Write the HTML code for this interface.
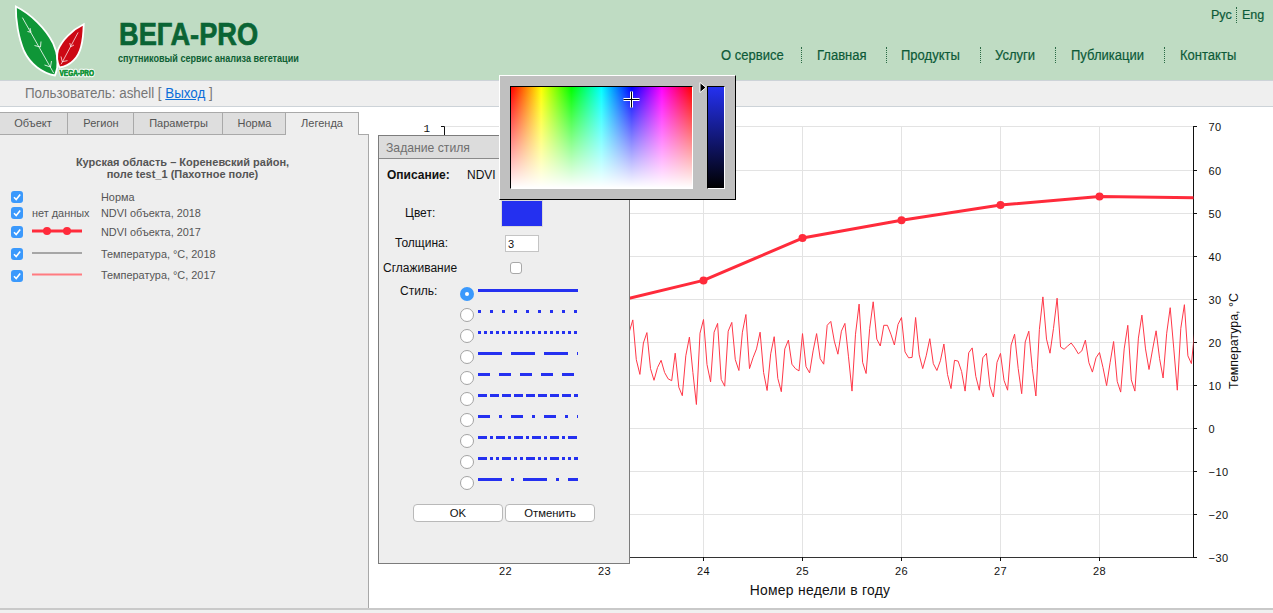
<!DOCTYPE html>
<html><head><meta charset="utf-8">
<style>
*{box-sizing:border-box}
html,body{margin:0;padding:0}
body{width:1273px;height:613px;overflow:hidden;position:relative;background:#fff;font-family:"Liberation Sans",sans-serif}
.abs{position:absolute;white-space:nowrap}
#hdr{position:absolute;left:0;top:0;width:1273px;height:80px;background:#bfdcc3}
.nav{position:absolute;top:47px;font-size:14px;color:#0d5a38;line-height:16px;-webkit-text-stroke:0.2px #0d5a38;transform:scaleX(0.93);transform-origin:0 0}
.vd{position:absolute;width:1px;border-left:1px dotted #2a6a45}
#ubar{position:absolute;left:0;top:80px;width:1273px;height:27px;background:#efefef;border-top:1px solid #cdd3d8;border-bottom:1px solid #cdd3d8}
#ubar .t{position:absolute;left:25px;top:4px;font-size:14px;color:#767676;line-height:16px;transform:scaleX(0.955);transform-origin:0 0}
#ubar a{color:#0b6ed9;text-decoration:underline}
.tab{position:absolute;top:112px;height:23px;background:#dedede;border:1px solid #a9a9a9;border-right:none;font-size:11px;color:#555;text-align:center;line-height:20px}
#panel{position:absolute;left:0;top:134px;width:369px;height:474px;background:#eeeeee;border-right:1px solid #a8a8a8}
#foot{position:absolute;left:0;top:608px;width:1273px;height:5px;background:#f0f0f0;border-top:2px solid #c9c9c9}
.lg{position:absolute;font-size:10.9px;color:#555;line-height:13px;margin-top:1px}
.cb{position:absolute;left:11px;width:12px;height:12px;border-radius:3px;background:#3b99fc}
.cb svg{position:absolute;left:0;top:0}
#chart{position:absolute;left:0;top:0}
.al{font-family:"Liberation Sans",sans-serif;font-size:11px;fill:#111;letter-spacing:0.4px}
#dlg{position:absolute;left:378px;top:135px;width:252px;height:429px;background:#eeeeee;border:1px solid #7c7c7c}
#dlgt{position:absolute;left:0;top:0;width:250px;height:23px;background:#dcdcdc;border-bottom:1px solid #8a8a8a}
.dt{position:absolute;font-size:12px;color:#111;line-height:14px}
.rad{position:absolute;left:460px;width:14px;height:14px;border-radius:50%;background:#fff;border:1px solid #a4a4a4}
.btn{position:absolute;top:504px;height:18px;background:#fff;border:1px solid #b9b9b9;border-radius:4px;font-size:11.3px;color:#111;text-align:center;line-height:16px}
#cp{position:absolute;left:499px;top:75px;width:237px;height:125px;background:#c0c0c0;border-top:1px solid #fff;border-left:1px solid #fff;border-right:1px solid #000;border-bottom:1px solid #000}
</style></head><body>
<div id="hdr">
  <svg class="abs" style="left:0;top:0" width="110" height="80" viewBox="0 0 110 80">
    <path d="M15.9,6.5 C31,14 46,29 53,43 C58,54 59,66 55,75.5 C42,73 30,64 24,51 C18.5,38 15.5,20 15.9,6.5 Z" fill="#0f9637" stroke="#fff" stroke-width="1.8"/>
    <path d="M22.4,17.6 L53.7,73.1 M31,32.3 L30,28 M31,32.3 L27.5,31.5 M40.5,47 L41,41.5 M40.5,47 L34.5,45.5 M50.5,67 L51.5,61 M50.5,67 L44.5,65" stroke="#fff" stroke-width="0.8" fill="none"/>
    <path d="M83.7,24.3 C72,30 62,40 58,50 C56,57 57.5,63 59.5,67.5 C71,66 78.5,57 81,47 C83,40 83.5,32 83.7,24.3 Z" fill="#cc0814" stroke="#fff" stroke-width="1.8"/>
    <path d="M78.1,32.5 L61.1,64.3 M70.7,46.8 L69.8,43 M70.7,46.8 L74,45 M62.2,61.7 L61,56.5 M62.2,61.7 L67.5,60.6" stroke="#fff" stroke-width="0.7" fill="none"/>
    <text x="59.5" y="75.6" font-family="Liberation Sans" font-weight="bold" font-size="8.6" fill="#14963a" stroke="#fff" stroke-width="2.6" stroke-linejoin="round" paint-order="stroke" textLength="34.5" lengthAdjust="spacingAndGlyphs">VEGA-PRO</text>
    <text x="59.5" y="75.6" font-family="Liberation Sans" font-weight="bold" font-size="8.6" fill="#14963a" stroke="#14963a" stroke-width="0.5" textLength="34.5" lengthAdjust="spacingAndGlyphs">VEGA-PRO</text>
  </svg>
  <div class="abs" style="left:119px;top:16px;font-size:31.8px;font-weight:bold;color:#0a6434;line-height:36px;-webkit-text-stroke:0.7px #0a6434;transform:scaleX(0.855);transform-origin:0 0">ВЕГА-PRO</div>
  <div class="abs" style="left:118px;top:52.5px;font-size:10px;font-weight:bold;color:#0e6034;line-height:12px;transform:scaleX(0.905);transform-origin:0 0">спутниковый сервис анализа вегетации</div>
  <div class="abs nav" style="top:7px;left:1211px;font-size:13.5px">Рус</div>
  <div class="vd" style="left:1236px;top:7px;height:16px"></div>
  <div class="abs nav" style="top:7px;left:1242px;font-size:13.5px">Eng</div>
  <div class="abs nav" style="left:721px">О сервисе</div>
  <div class="vd" style="left:801px;top:47px;height:16px"></div>
  <div class="abs nav" style="left:817px">Главная</div>
  <div class="vd" style="left:886px;top:47px;height:16px"></div>
  <div class="abs nav" style="left:901px">Продукты</div>
  <div class="vd" style="left:980px;top:47px;height:16px"></div>
  <div class="abs nav" style="left:995px">Услуги</div>
  <div class="vd" style="left:1055px;top:47px;height:16px"></div>
  <div class="abs nav" style="left:1071px">Публикации</div>
  <div class="vd" style="left:1164px;top:47px;height:16px"></div>
  <div class="abs nav" style="left:1180px">Контакты</div>
</div>
<div id="ubar"><div class="t abs">Пользователь: ashell [ <a>Выход</a> ]</div></div>

<svg id="chart" width="1273" height="613" viewBox="0 0 1273 613">
  <defs><clipPath id="plot"><rect x="445" y="110" width="748.5" height="447.5"/></clipPath></defs>
  <line x1="445" y1="126.5" x2="1194" y2="126.5" stroke="#e3e3e3" stroke-width="1"/>
<line x1="445" y1="170.5" x2="1194" y2="170.5" stroke="#e3e3e3" stroke-width="1"/>
<line x1="445" y1="213.5" x2="1194" y2="213.5" stroke="#e3e3e3" stroke-width="1"/>
<line x1="445" y1="256.5" x2="1194" y2="256.5" stroke="#e3e3e3" stroke-width="1"/>
<line x1="445" y1="299.5" x2="1194" y2="299.5" stroke="#e3e3e3" stroke-width="1"/>
<line x1="445" y1="342.5" x2="1194" y2="342.5" stroke="#e3e3e3" stroke-width="1"/>
<line x1="445" y1="385.5" x2="1194" y2="385.5" stroke="#e3e3e3" stroke-width="1"/>
<line x1="445" y1="428.5" x2="1194" y2="428.5" stroke="#e3e3e3" stroke-width="1"/>
<line x1="445" y1="471.5" x2="1194" y2="471.5" stroke="#e3e3e3" stroke-width="1"/>
<line x1="445" y1="514.5" x2="1194" y2="514.5" stroke="#e3e3e3" stroke-width="1"/>
<line x1="445" y1="557.5" x2="1194" y2="557.5" stroke="#e3e3e3" stroke-width="1"/>
<line x1="505.5" y1="126" x2="505.5" y2="557" stroke="#e3e3e3" stroke-width="1"/>
<line x1="604.5" y1="126" x2="604.5" y2="557" stroke="#e3e3e3" stroke-width="1"/>
<line x1="703.5" y1="126" x2="703.5" y2="557" stroke="#e3e3e3" stroke-width="1"/>
<line x1="802.5" y1="126" x2="802.5" y2="557" stroke="#e3e3e3" stroke-width="1"/>
<line x1="901.5" y1="126" x2="901.5" y2="557" stroke="#e3e3e3" stroke-width="1"/>
<line x1="1000.5" y1="126" x2="1000.5" y2="557" stroke="#e3e3e3" stroke-width="1"/>
<line x1="1099.5" y1="126" x2="1099.5" y2="557" stroke="#e3e3e3" stroke-width="1"/>
  <text x="423.5" y="131.6" font-family="Liberation Mono" font-size="11" fill="#111">1</text>
  <path d="M441,126.5 H444.5 V560" stroke="#111" stroke-width="1" fill="none"/>
  <line x1="445" y1="557.5" x2="1197" y2="557.5" stroke="#333" stroke-width="1"/>
  <line x1="1193.5" y1="126" x2="1193.5" y2="558" stroke="#111" stroke-width="1"/>
  <line x1="1193" y1="126.5" x2="1197" y2="126.5" stroke="#111" stroke-width="1"/>
<text x="1208.6" y="130.7" class="al">70</text>
<line x1="1193" y1="170.5" x2="1197" y2="170.5" stroke="#111" stroke-width="1"/>
<text x="1208.6" y="174.7" class="al">60</text>
<line x1="1193" y1="213.5" x2="1197" y2="213.5" stroke="#111" stroke-width="1"/>
<text x="1208.6" y="217.7" class="al">50</text>
<line x1="1193" y1="256.5" x2="1197" y2="256.5" stroke="#111" stroke-width="1"/>
<text x="1208.6" y="260.7" class="al">40</text>
<line x1="1193" y1="299.5" x2="1197" y2="299.5" stroke="#111" stroke-width="1"/>
<text x="1208.6" y="303.7" class="al">30</text>
<line x1="1193" y1="342.5" x2="1197" y2="342.5" stroke="#111" stroke-width="1"/>
<text x="1208.6" y="346.7" class="al">20</text>
<line x1="1193" y1="385.5" x2="1197" y2="385.5" stroke="#111" stroke-width="1"/>
<text x="1208.6" y="389.7" class="al">10</text>
<line x1="1193" y1="428.5" x2="1197" y2="428.5" stroke="#111" stroke-width="1"/>
<text x="1208.6" y="432.7" class="al">0</text>
<line x1="1193" y1="471.5" x2="1197" y2="471.5" stroke="#111" stroke-width="1"/>
<text x="1208.6" y="475.7" class="al">&#8722;10</text>
<line x1="1193" y1="514.5" x2="1197" y2="514.5" stroke="#111" stroke-width="1"/>
<text x="1208.6" y="518.7" class="al">&#8722;20</text>
<line x1="1193" y1="557.5" x2="1197" y2="557.5" stroke="#111" stroke-width="1"/>
<text x="1208.6" y="561.7" class="al">&#8722;30</text>
<line x1="505.5" y1="557" x2="505.5" y2="561" stroke="#111" stroke-width="1"/>
<text x="505.5" y="575.1" class="al" text-anchor="middle">22</text>
<line x1="604.5" y1="557" x2="604.5" y2="561" stroke="#111" stroke-width="1"/>
<text x="604.5" y="575.1" class="al" text-anchor="middle">23</text>
<line x1="703.5" y1="557" x2="703.5" y2="561" stroke="#111" stroke-width="1"/>
<text x="703.5" y="575.1" class="al" text-anchor="middle">24</text>
<line x1="802.5" y1="557" x2="802.5" y2="561" stroke="#111" stroke-width="1"/>
<text x="802.5" y="575.1" class="al" text-anchor="middle">25</text>
<line x1="901.5" y1="557" x2="901.5" y2="561" stroke="#111" stroke-width="1"/>
<text x="901.5" y="575.1" class="al" text-anchor="middle">26</text>
<line x1="1000.5" y1="557" x2="1000.5" y2="561" stroke="#111" stroke-width="1"/>
<text x="1000.5" y="575.1" class="al" text-anchor="middle">27</text>
<line x1="1099.5" y1="557" x2="1099.5" y2="561" stroke="#111" stroke-width="1"/>
<text x="1099.5" y="575.1" class="al" text-anchor="middle">28</text>
  <g clip-path="url(#plot)">
    <polyline points="625.7,348.9 629.2,332.2 632.8,319.9 636.3,359.7 639.9,374.4 643.4,343.0 646.9,332.6 650.5,368.6 654.0,380.3 657.5,367.6 661.1,360.3 664.6,372.5 668.1,378.8 671.7,380.7 675.2,353.2 678.8,387.2 682.3,395.7 685.8,355.8 689.4,337.1 692.9,372.5 696.4,404.5 700.0,333.2 703.5,319.5 707.0,364.6 710.6,381.9 714.1,332.2 717.6,323.4 721.2,379.4 724.7,386.2 728.2,331.2 731.8,322.4 735.3,359.7 738.9,370.5 742.4,332.2 745.9,314.5 749.5,368.6 753.0,357.8 756.5,348.9 760.1,332.2 763.6,372.5 767.1,390.5 770.7,353.8 774.2,336.7 777.8,378.4 781.3,391.7 784.8,348.9 788.4,340.1 791.9,364.2 795.4,368.6 799.0,370.9 802.5,333.6 806.0,366.6 809.6,372.9 813.1,350.9 816.6,333.6 820.2,358.7 823.7,364.2 827.2,325.3 830.8,321.4 834.3,341.1 837.9,354.2 841.4,331.2 844.9,323.4 848.5,356.8 852.0,391.1 855.5,334.2 859.1,304.1 862.6,362.3 866.1,373.5 869.7,328.3 873.2,301.8 876.8,339.1 880.3,346.0 883.8,325.3 887.4,325.3 890.9,334.2 894.4,345.0 898.0,324.4 901.5,317.5 905.0,351.9 908.6,357.8 912.1,357.4 915.6,317.5 919.2,354.8 922.7,368.6 926.2,355.8 929.8,338.7 933.3,363.6 936.9,370.5 940.4,360.7 943.9,344.0 947.5,374.4 951.0,388.6 954.5,360.3 958.1,361.1 961.6,371.5 965.1,391.1 968.7,352.8 972.2,347.9 975.8,376.4 979.3,390.2 982.8,357.8 986.4,353.4 989.9,386.2 993.4,397.0 997.0,362.3 1000.5,353.4 1004.0,380.3 1007.6,390.2 1011.1,345.0 1014.6,334.2 1018.2,368.6 1021.7,393.7 1025.2,342.0 1028.8,331.2 1032.3,368.6 1035.9,396.0 1039.4,329.3 1042.9,296.9 1046.5,339.1 1050.0,353.2 1053.5,328.3 1057.1,298.2 1060.6,347.0 1064.1,349.3 1067.7,346.0 1071.2,343.0 1074.8,347.9 1078.3,353.8 1081.8,350.9 1085.4,340.1 1088.9,362.7 1092.4,372.1 1096.0,357.8 1099.5,352.5 1103.0,367.6 1106.6,385.6 1110.1,362.7 1113.6,341.5 1117.2,381.3 1120.7,392.1 1124.2,348.9 1127.8,325.3 1131.3,379.9 1134.9,391.1 1138.4,338.1 1141.9,315.1 1145.5,348.9 1149.0,369.5 1152.5,349.9 1156.1,330.8 1159.6,358.7 1163.1,378.0 1166.7,333.2 1170.2,307.7 1173.8,348.9 1177.3,390.2 1180.8,328.3 1184.4,304.7 1187.9,355.8 1191.4,363.6 1195.0,328.3" fill="none" stroke="#ff3848" stroke-width="1" stroke-linejoin="miter"/>
    <polyline points="505.5,330.0 604.5,304.3 703.5,280.4 802.5,238.1 901.5,220.2 1000.5,205.1 1099.5,196.4 1198.5,197.9" fill="none" stroke="#ff2b3b" stroke-width="3" stroke-linejoin="round"/>
    <circle cx="604.5" cy="304.3" r="4" fill="#ff2b3b"/><circle cx="703.5" cy="280.4" r="4" fill="#ff2b3b"/><circle cx="802.5" cy="238.1" r="4" fill="#ff2b3b"/><circle cx="901.5" cy="220.2" r="4" fill="#ff2b3b"/><circle cx="1000.5" cy="205.1" r="4" fill="#ff2b3b"/><circle cx="1099.5" cy="196.4" r="4" fill="#ff2b3b"/>
  </g>
  <text x="749.7" y="594.8" font-family="Liberation Sans" font-size="13.9" fill="#111" letter-spacing="0.28">Номер недели в году</text>
  <text transform="translate(1237.5,341) rotate(-90)" text-anchor="middle" font-family="Liberation Sans" font-size="12.4" fill="#111">Температура, °C</text>
</svg>

<div class="tab" style="left:-1px;width:69px;padding-right:2px">Объект</div>
<div class="tab" style="left:67px;width:67px">Регион</div>
<div class="tab" style="left:133px;width:90px">Параметры</div>
<div class="tab" style="left:222px;width:64px">Норма</div>
<div id="panel">
  <div class="abs" style="left:0;top:0;width:286px;height:1px;background:#a9a9a9"></div>
  <div class="abs" style="left:358px;top:0;width:10px;height:1px;background:#a9a9a9"></div>
  <div class="abs" style="left:0;top:21.5px;width:365px;text-align:center;font-size:11px;font-weight:bold;color:#555;line-height:12px">Курская область – Кореневский район,<br>поле test_1 (Пахотное поле)</div>
</div>
<div class="tab" style="left:285px;width:74px;height:23px;background:#eeeeee;border-right:1px solid #a9a9a9;border-bottom:none">Легенда</div>

<div class="cb" style="top:191px"><svg width="12" height="12"><path d="M3,6.3 L5.2,8.5 L9.2,3.6" stroke="#fff" stroke-width="1.6" fill="none"/></svg></div>
<div class="cb" style="top:207px"><svg width="12" height="12"><path d="M3,6.3 L5.2,8.5 L9.2,3.6" stroke="#fff" stroke-width="1.6" fill="none"/></svg></div>
<div class="cb" style="top:226px"><svg width="12" height="12"><path d="M3,6.3 L5.2,8.5 L9.2,3.6" stroke="#fff" stroke-width="1.6" fill="none"/></svg></div>
<div class="cb" style="top:248px"><svg width="12" height="12"><path d="M3,6.3 L5.2,8.5 L9.2,3.6" stroke="#fff" stroke-width="1.6" fill="none"/></svg></div>
<div class="cb" style="top:270px"><svg width="12" height="12"><path d="M3,6.3 L5.2,8.5 L9.2,3.6" stroke="#fff" stroke-width="1.6" fill="none"/></svg></div>
<div class="abs lg" style="left:101px;top:190px">Норма</div>
<div class="abs lg" style="left:32px;top:206px">нет данных</div>
<div class="abs lg" style="left:101px;top:206px">NDVI объекта, 2018</div>
<div class="abs lg" style="left:101px;top:225px">NDVI объекта, 2017</div>
<div class="abs lg" style="left:101px;top:247px">Температура, °C, 2018</div>
<div class="abs lg" style="left:101px;top:268px">Температура, °C, 2017</div>
<svg class="abs" style="left:30px;top:222px" width="56" height="60">
  <line x1="2" y1="9" x2="52" y2="9" stroke="#ff2b3b" stroke-width="3"/>
  <circle cx="17" cy="9" r="4" fill="#ff2b3b"/><circle cx="37" cy="9" r="4" fill="#ff2b3b"/>
  <line x1="2" y1="31" x2="52" y2="31" stroke="#a6a6a6" stroke-width="2"/>
  <line x1="2" y1="52.5" x2="52" y2="52.5" stroke="#ff7b80" stroke-width="2"/>
</svg>

<div id="dlg">
  <div id="dlgt"><div class="abs" style="left:7px;top:4.5px;font-size:12.2px;color:#6f6f6f;line-height:14px">Задание стиля</div></div>
</div>
<div class="abs dt" style="left:387px;top:168px;font-weight:bold">Описание:</div>
<div class="abs dt" style="left:467px;top:168px">NDVI</div>
<div class="abs" style="left:501px;top:200px;width:42px;height:27px;border:1px solid #dadada;background:#fff"></div>
<div class="abs" style="left:502px;top:201px;width:40px;height:25px;background:#2430f0"></div>
<div class="abs dt" style="left:405px;top:206px">Цвет:</div>
<div class="abs dt" style="left:395px;top:236px">Толщина:</div>
<div class="abs" style="left:505px;top:235px;width:34px;height:17px;background:#fff;border:1px solid #c4c4c4;font-size:11px;line-height:17px;padding-left:2px;color:#111">3</div>
<div class="abs dt" style="left:383px;top:261px">Сглаживание</div>
<div class="abs" style="left:510px;top:262px;width:12px;height:12px;background:#fff;border:1px solid #a8a8a8;border-radius:3px"></div>
<div class="abs dt" style="left:400px;top:284px">Стиль:</div>
<div class="abs" style="left:460px;top:287px;width:14px;height:14px;border-radius:50%;background:#3b99fc"></div>
<div class="abs" style="left:465px;top:292px;width:4px;height:4px;border-radius:50%;background:#fff"></div>
<div class="rad" style="top:308px"></div>
<div class="rad" style="top:329px"></div>
<div class="rad" style="top:350px"></div>
<div class="rad" style="top:371px"></div>
<div class="rad" style="top:392px"></div>
<div class="rad" style="top:413px"></div>
<div class="rad" style="top:434px"></div>
<div class="rad" style="top:455px"></div>
<div class="rad" style="top:476px"></div>
<svg class="abs" style="left:478px;top:281px" width="100" height="205">
  <g stroke="#2430f0" stroke-width="3" fill="none">
    <line x1="0" y1="9.5" x2="100" y2="9.5"/>
    <line x1="0" y1="30.5" x2="100" y2="30.5" stroke-dasharray="3,9"/>
    <line x1="0" y1="51.5" x2="100" y2="51.5" stroke-dasharray="3,3"/>
    <line x1="0" y1="72.5" x2="100" y2="72.5" stroke-dasharray="24,9"/>
    <line x1="0" y1="93.5" x2="100" y2="93.5" stroke-dasharray="12,9"/>
    <line x1="0" y1="114.5" x2="100" y2="114.5" stroke-dasharray="9,3"/>
    <line x1="0" y1="135.5" x2="100" y2="135.5" stroke-dasharray="12,9,3,9"/>
    <line x1="0" y1="156.5" x2="100" y2="156.5" stroke-dasharray="9,3,3,3"/>
    <line x1="0" y1="177.5" x2="100" y2="177.5" stroke-dasharray="9,3,3,3,3,3"/>
    <line x1="0" y1="198.5" x2="100" y2="198.5" stroke-dasharray="24,9,3,9"/>
  </g>
</svg>
<div class="btn" style="left:413px;width:90px">OK</div>
<div class="btn" style="left:505px;width:90px">Отменить</div>

<div id="cp">
  <div class="abs" style="left:10px;top:10px;width:183px;height:103px;border-top:1px solid #000;border-left:1px solid #000;border-right:1px solid #fff;border-bottom:1px solid #fff"></div>
  <div class="abs" style="left:11px;top:11px;width:181px;height:101px;background:linear-gradient(to right,#f00 0%,#ff0 16.67%,#0f0 33.33%,#0ff 50%,#00f 66.67%,#f0f 83.33%,#f00 100%)"></div>
  <div class="abs" style="left:11px;top:11px;width:181px;height:101px;background:linear-gradient(to bottom,rgba(255,255,255,0) 0%,#fff 100%)"></div>
  <div class="abs" style="left:207px;top:10px;width:18px;height:103px;border-top:1px solid #000;border-left:1px solid #000;border-right:1px solid #fff;border-bottom:1px solid #fff"></div>
  <div class="abs" style="left:208px;top:11px;width:16px;height:101px;background:linear-gradient(to bottom,#2430f0 0%,#000 100%)"></div>
  <svg class="abs" style="left:198px;top:5px" width="10" height="14"><path d="M2,1.5 L8,6.5 L2,11.5 Z" fill="#000" stroke="#fff" stroke-width="1"/></svg>
  <svg class="abs" style="left:121.5px;top:14px" width="19" height="19"><path d="M1.5,9.5 H17.5 M9.5,1.5 V17.5" stroke="#fff" stroke-width="3"/><path d="M1.5,9.5 H17.5 M9.5,1.5 V17.5" stroke="#000" stroke-width="1"/></svg>
</div>
<div id="foot"></div>
</body></html>
